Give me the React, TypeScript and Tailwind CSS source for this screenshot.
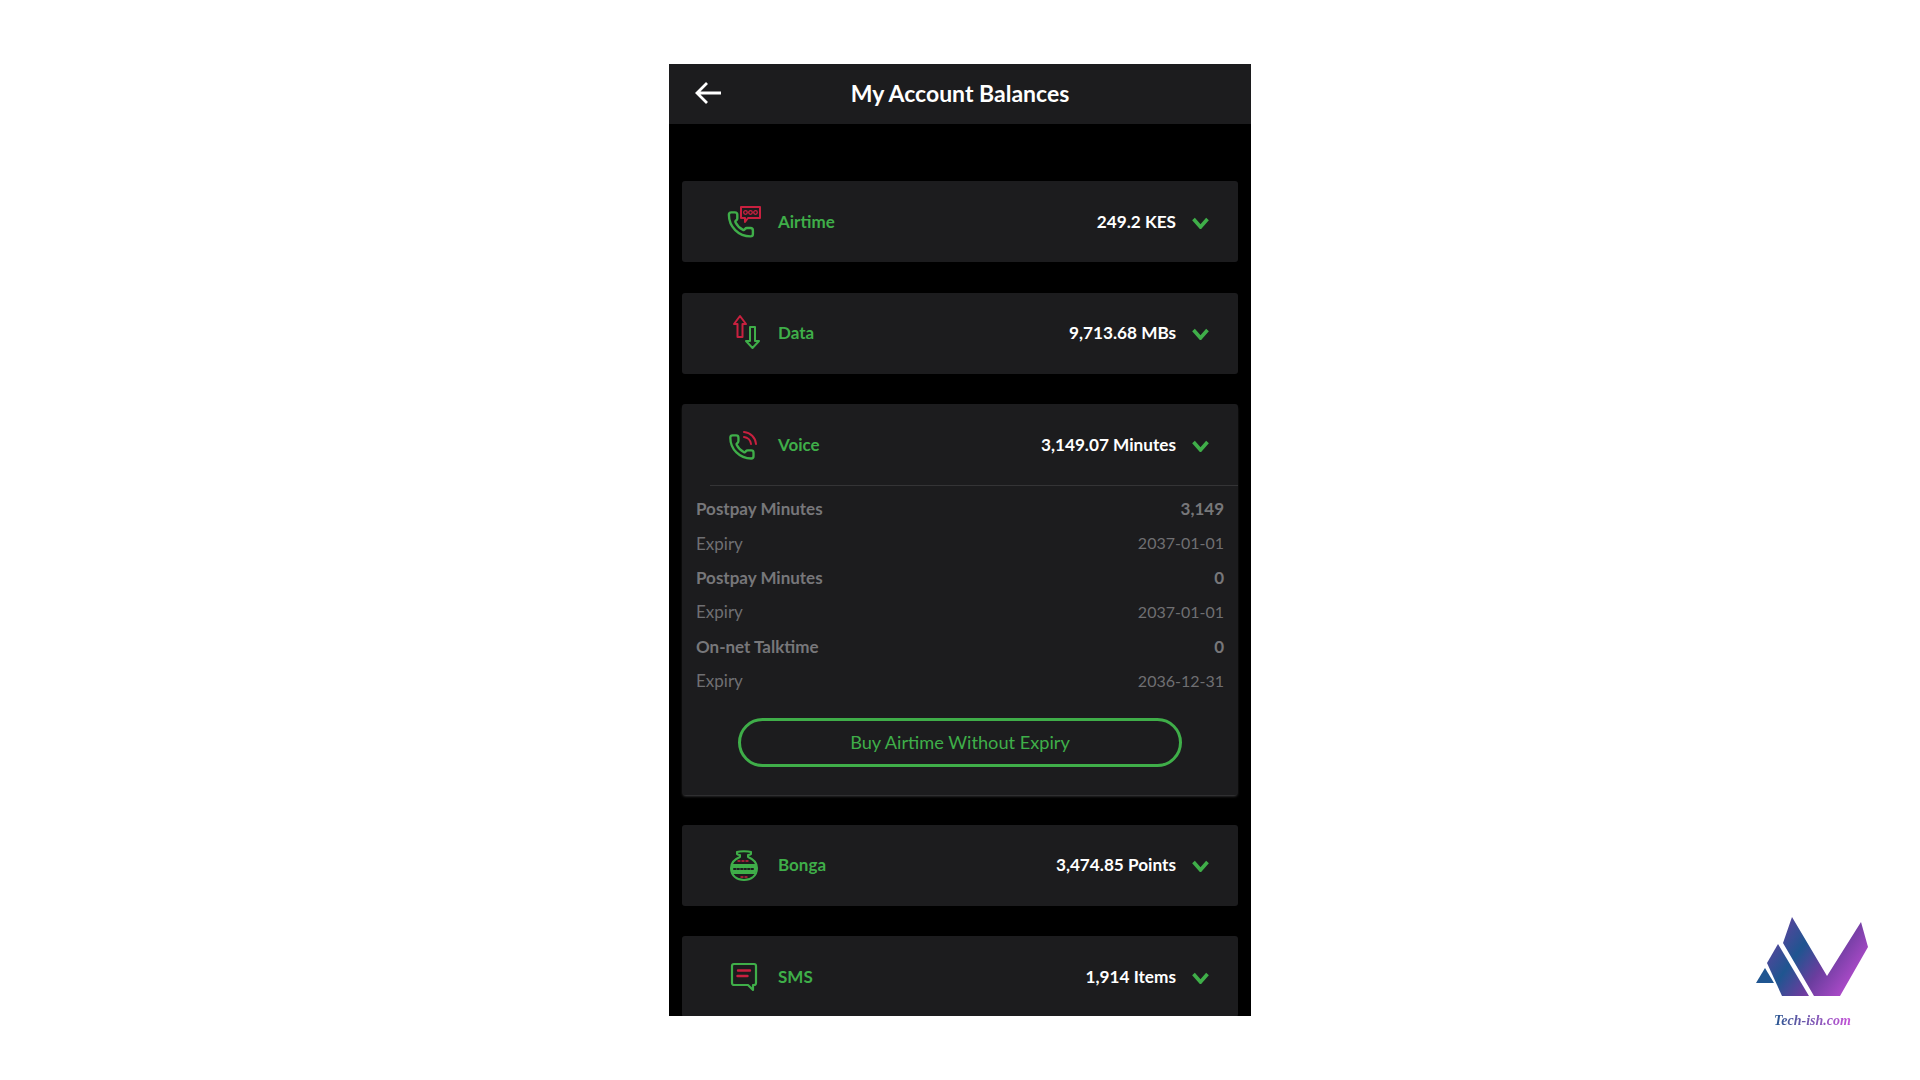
const GREEN = "#3fae49";
const RED = "#c8203f";
const PHONE = "M13.832 16.568a1 1 0 0 0 1.213-.303l.355-.465A2 2 0 0 1 17 15h3a2 2 0 0 1 2 2v3a2 2 0 0 1-2 2A18 18 0 0 1 2 4a2 2 0 0 1 2-2h3a2 2 0 0 1 2 2v3a2 2 0 0 1-.8 1.6l-.468.351a1 1 0 0 0-.292 1.233 14 14 0 0 0 6.392 6.384";

function AirtimeIcon() {
  return (
    <svg className="ml-[1px]" width="36" height="34" viewBox="0 0 36 34" fill="none" strokeLinecap="round" strokeLinejoin="round">
      <g transform="translate(-0.500 5) scale(1.2)">
        <path d={PHONE} stroke={GREEN} strokeWidth="2" />
      </g>
      <path d="M14 2h19v11H21l-3 4v-4h-4z" fill="#1c1c1e" stroke={RED} strokeWidth="2" />
      <circle cx="18.500" cy="7.500" r="1.800" stroke={RED} strokeWidth="1.300" />
      <circle cx="23.500" cy="7.500" r="1.800" stroke={RED} strokeWidth="1.300" />
      <circle cx="28.500" cy="7.500" r="1.800" stroke={RED} strokeWidth="1.300" />
    </svg>
  );
}

function DataIcon() {
  return (
    <svg className="ml-[6px] -mt-[2px]" width="30" height="36" viewBox="0 0 30 36" fill="none" strokeLinejoin="round">
      <path d="M8 2 14 10h-3.500v13h-5V10H2z" stroke={RED} strokeWidth="2" />
      <path d="M18 13h5v14h4l-6.500 7L14 27h4z" stroke={GREEN} strokeWidth="2" />
    </svg>
  );
}

function VoiceIcon() {
  return (
    <svg className="ml-[2px]" width="30" height="30" viewBox="0 0 30 30" fill="none" strokeLinecap="round" strokeLinejoin="round">
      <g transform="translate(0 3) scale(1.160)">
        <path d={PHONE} stroke={GREEN} strokeWidth="2" />
      </g>
      <path d="M16 7a8 8 0 0 1 7 7" stroke={RED} strokeWidth="2" />
      <path d="M16 2a13 13 0 0 1 12 12" stroke={RED} strokeWidth="2" />
    </svg>
  );
}

function BongaIcon() {
  return (
    <svg className="ml-[3px] mt-[2px]" width="30" height="32" viewBox="0 0 30 32" fill="none" strokeLinecap="round" strokeLinejoin="round">
      <path d="M8 2c3-1 11-1 14 0v2c-1 1-2 1-3 1v2c5 2 9 6 9 11 0 8-6 12-13 12S2 26 2 18c0-5 4-9 9-11V5c-1 0-2 0-3-1z" stroke={GREEN} strokeWidth="2" />
      <path d="M3 14h24l1 5-2 5H4l-2-5z" fill={GREEN} />
      <path d="M5 19h20" stroke="#1c1c1e" strokeWidth="2" strokeDasharray="1.500 2" />
      <path d="M9 11h12M12 27h6" stroke={RED} strokeWidth="1.400" strokeDasharray="2 2" />
    </svg>
  );
}

function SmsIcon() {
  return (
    <svg className="ml-[4px]" width="28" height="30" viewBox="0 0 28 30" fill="none" strokeLinecap="round" strokeLinejoin="round">
      <path d="M4 2h20a2 2 0 0 1 2 2v17a2 2 0 0 1-2 2h-1v5l-5-5H4a2 2 0 0 1-2-2V4a2 2 0 0 1 2-2z" stroke={GREEN} strokeWidth="2.200" />
      <path d="M8 8.500h12M7.500 14h10" stroke={RED} strokeWidth="2.400" />
    </svg>
  );
}

function Chevron() {
  return (
    <svg width="17" height="12" viewBox="0 0 17 12" fill="none">
      <path d="M1.500 2 8.500 10 15.500 2" stroke={GREEN} strokeWidth="3.600" />
    </svg>
  );
}

function CardHead({ icon, label, value }: { icon: React.ReactNode; label: string; value: string }) {
  return (
    <div className="flex h-[81px] shrink-0 items-center pl-[44px] pr-[29px]">
      <div className="flex w-[52px] items-center">{icon}</div>
      <span className="flex-1 text-[17px] font-bold text-[#3fae49]">{label}</span>
      <span className="text-[17.200px] font-bold text-white">{value}</span>
      <span className="ml-[16px] mt-[2px] flex"><Chevron /></span>
    </div>
  );
}

const rows = [
  ["Postpay Minutes", "3,149", true],
  ["Expiry", "2037-01-01", false],
  ["Postpay Minutes", "0", true],
  ["Expiry", "2037-01-01", false],
  ["On-net Talktime", "0", true],
  ["Expiry", "2036-12-31", false],
] as const;

export default function App() {
  return (
    <div className="relative h-[1080px] w-full overflow-hidden bg-white font-['Lato','Liberation_Sans',sans-serif]">
      <div className="flex justify-center pt-[64px]">
        <div className="flex h-[952px] w-[582px] flex-col overflow-hidden bg-black">
          <div className="relative flex h-[60px] shrink-0 items-center justify-center bg-[#1c1c1e]">
            <svg className="absolute left-[26px] top-[17px]" width="27" height="24" viewBox="0 0 27 24" fill="none">
              <path d="M26 12H2M12 2 2 12l10 10" stroke="#fff" strokeWidth="2.800" />
            </svg>
            <h1 className="-mt-[1px] text-[23px] font-bold text-white">My Account Balances</h1>
          </div>

          <div className="flex flex-col gap-[30.500px] px-[13px] pt-[57px]">
            <div className="rounded-[3px] bg-[#1c1c1e]">
              <CardHead icon={<AirtimeIcon />} label="Airtime" value="249.2 KES" />
            </div>
            <div className="rounded-[3px] bg-[#1c1c1e]">
              <CardHead icon={<DataIcon />} label="Data" value="9,713.68 MBs" />
            </div>
            <div className="-mb-[1px] h-[391px] rounded-[3px] bg-[#1c1c1e] shadow-[0_2px_3px_-1px_#4a4a4c]">
              <CardHead icon={<VoiceIcon />} label="Voice" value="3,149.07 Minutes" />
              <div className="ml-[28px] h-px bg-[#343436]" />
              <div className="flex flex-col px-[14px] pt-[6px]">
                {rows.map(([label, value, strong], i) => (
                  <div key={i} className={`flex h-[34.300px] items-center justify-between ${strong ? "text-[17px] font-bold text-[#77777a]" : "text-[17px] text-[#6f6f72]"}`}>
                    <span>{label}</span>
                    <span className={strong ? "" : "text-[16px]"}>{value}</span>
                  </div>
                ))}
              </div>
              <div className="mx-[56px] mt-[20px] flex h-[49px] items-center justify-center rounded-full border-[3px] border-[#3fae49] text-[18.200px] text-[#3fae49]">
                Buy Airtime Without Expiry
              </div>
            </div>
            <div className="rounded-[3px] bg-[#1c1c1e]">
              <CardHead icon={<BongaIcon />} label="Bonga" value="3,474.85 Points" />
            </div>
            <div className="rounded-[3px] bg-[#1c1c1e]">
              <CardHead icon={<SmsIcon />} label="SMS" value="1,914 Items" />
            </div>
          </div>
        </div>
      </div>

      <div className="absolute left-[1755px] top-[916px] flex w-[115px] flex-col items-center">
        <svg width="115" height="82" viewBox="1755 916 115 82">
          <defs>
            <linearGradient id="logoGrad" gradientUnits="userSpaceOnUse" x1="1770" y1="925" x2="1860" y2="990">
              <stop offset="0" stopColor="#6b3fa0" />
              <stop offset="0.35" stopColor="#1f5590" />
              <stop offset="0.6" stopColor="#6a3d9e" />
              <stop offset="1" stopColor="#c44fd8" />
            </linearGradient>
          </defs>
          <path d="M1792 917 1827 976 1861 922 1868 947 1840 996H1814L1783 943z" fill="url(#logoGrad)" />
          <path d="M1778 944 1767 963 1782 996H1809z" fill="url(#logoGrad)" />
          <path d="M1765 968 1756 983H1774z" fill="#1f5590" />
        </svg>
        <span className="mt-[12px] whitespace-nowrap bg-gradient-to-r from-[#1f5590] to-[#c44fd8] bg-clip-text font-['Liberation_Serif',serif] text-[14px] font-bold italic text-transparent">
          Tech-ish.com
        </span>
      </div>
    </div>
  );
}
